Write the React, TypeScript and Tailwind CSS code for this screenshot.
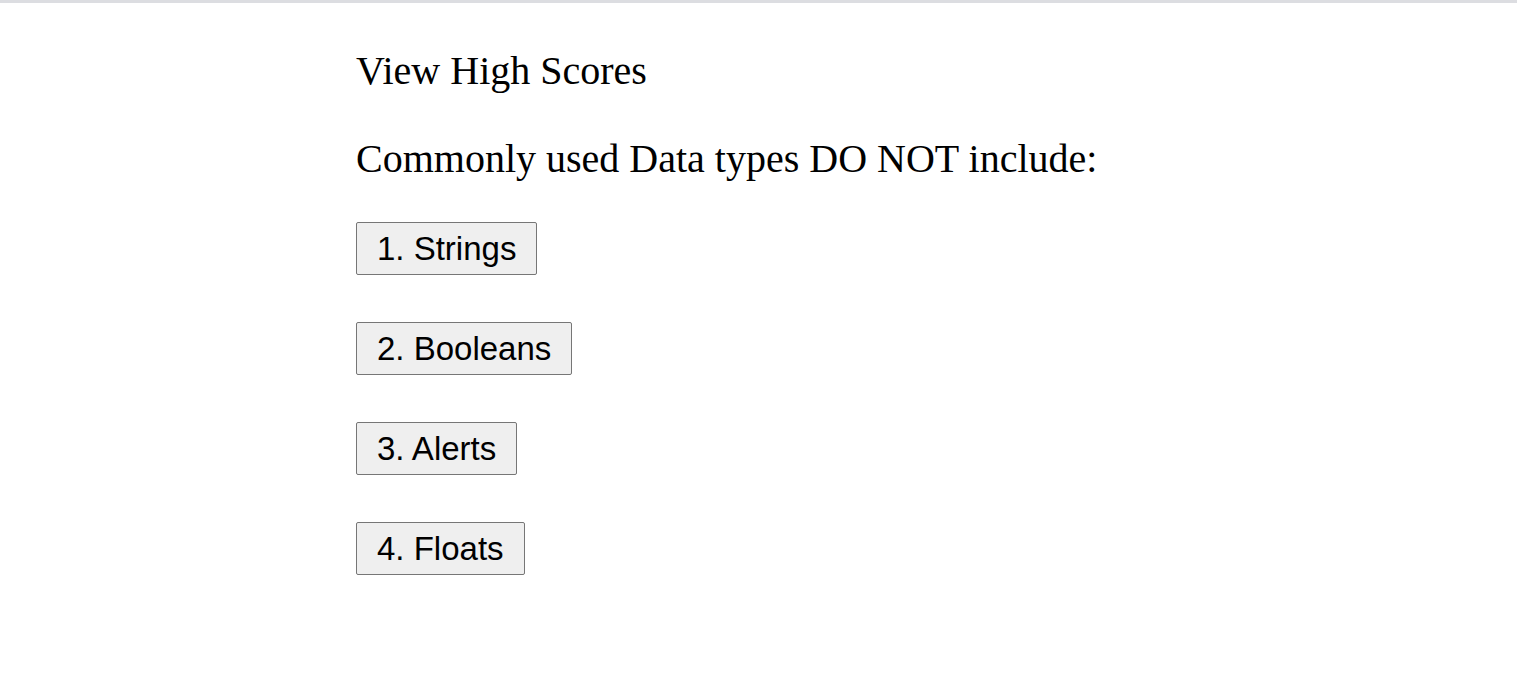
export default function App() {
  const answers = ["1. Strings", "2. Booleans", "3. Alerts", "4. Floats"];
  return (
    <div className="min-h-[698px] bg-white border-t-[3px] border-[#dcdde1]" style={{ fontFamily: '"Liberation Serif", serif' }}>
      <div className="ml-[356px] pt-[45px] flex flex-col items-start">
        <div className="text-[40px] leading-[46px] text-black">View High Scores</div>
        <div className="mt-[42px] text-[40px] leading-[46px] text-black">Commonly used Data types DO NOT include:</div>
        <div className="mt-[40px] flex flex-col items-start gap-[47px]">
          {answers.map((a) => (
            <button
              key={a}
              className="bg-[#efefef] border border-[#767676] rounded-[2px] px-[20px] h-[53px] text-[33px] leading-[38px] text-black"
              style={{ fontFamily: '"Liberation Sans", Arial, sans-serif' }}
            >
              {a}
            </button>
          ))}
        </div>
      </div>
    </div>
  );
}
